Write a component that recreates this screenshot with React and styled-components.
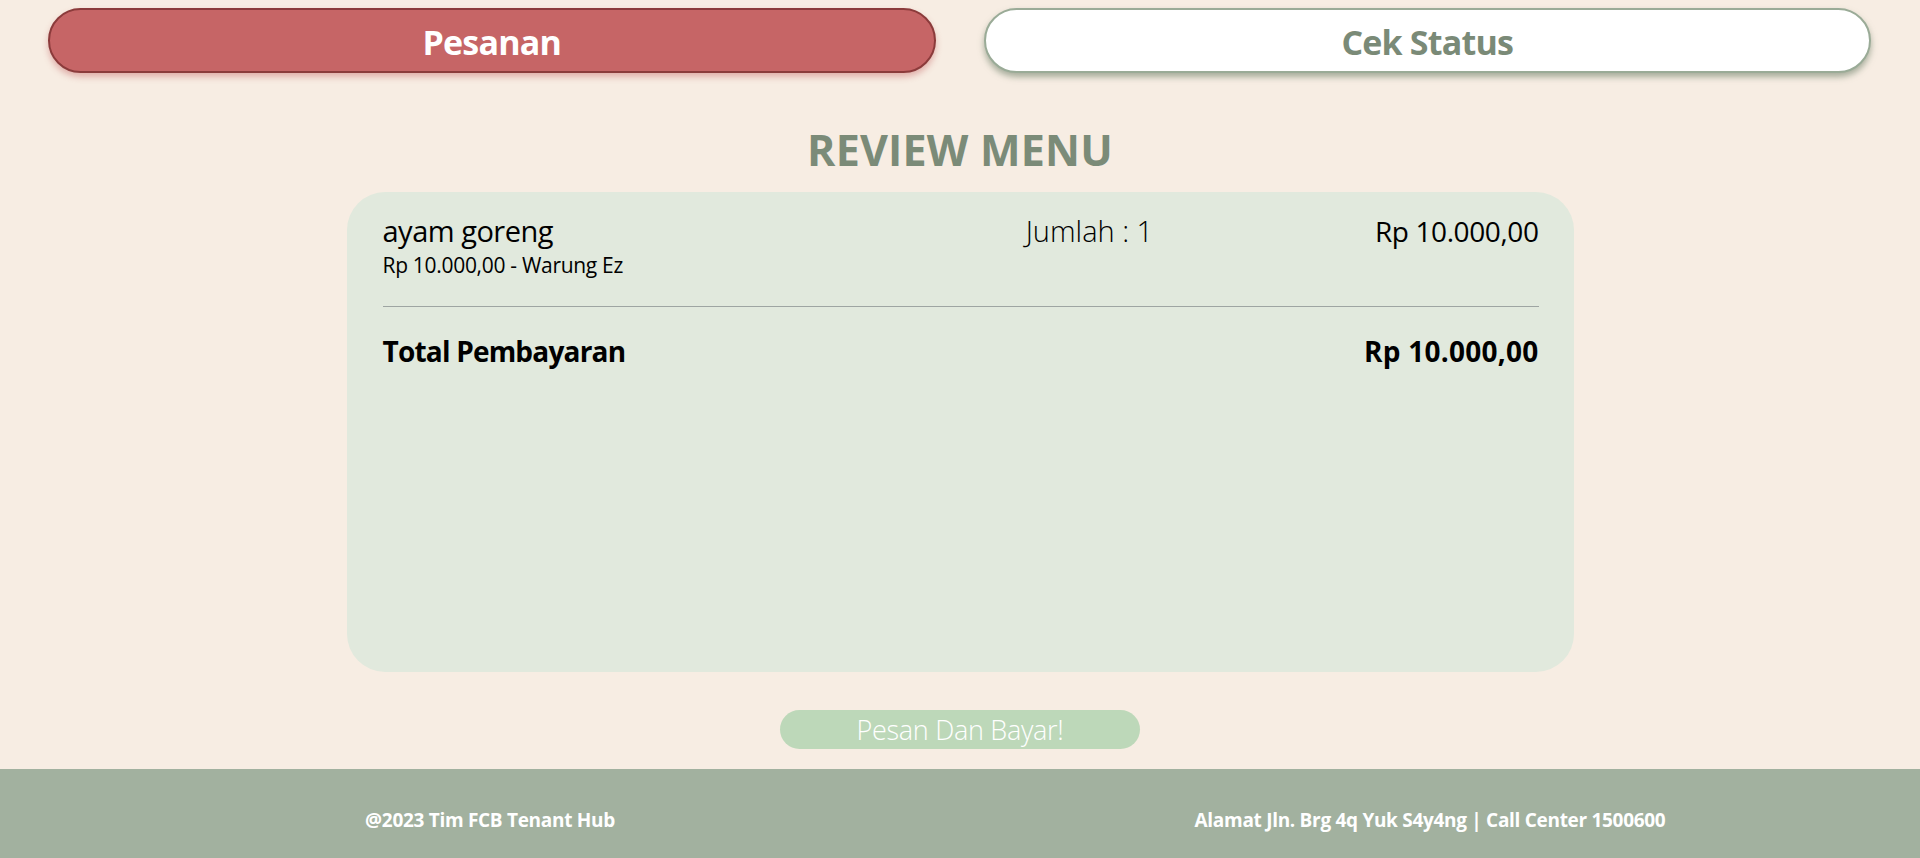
import React from "react";
import styled, { createGlobalStyle } from "styled-components";

const Global = createGlobalStyle`
  * { box-sizing: border-box; }
  html, body { margin: 0; padding: 0; }
  body {
    background: #f7ede3;
    font-family: "Open Sans", "Noto Sans", sans-serif;
    color: #000;
  }
`;

const Page = styled.div`
  min-height: 858px;
  display: flex;
  flex-direction: column;
`;

const TabBar = styled.nav`
  display: grid;
  grid-template-columns: 1fr 1fr;
  gap: 48px;
  padding: 8px 49px 0 48px;
`;

const Tab = styled.button`
  height: 65px;
  border-radius: 33px;
  border: 2px solid ${(p) => (p.$active ? "#8b3b3b" : "#9aab97")};
  background: ${(p) => (p.$active ? "#c66566" : "#ffffff")};
  color: ${(p) => (p.$active ? "#ffffff" : "#7a8a77")};
  box-shadow: 0 4px 6px
    ${(p) => (p.$active ? "rgba(198, 101, 102, 0.45)" : "rgba(100, 120, 96, 0.55)")};
  font-family: "Open Sans", sans-serif;
  font-weight: 700;
  font-size: 34px;
  letter-spacing: -0.8px;
  line-height: 44px;
  cursor: pointer;
  padding: 3px 0 0;
`;

const Main = styled.main`
  display: flex;
  flex-direction: column;
  align-items: center;
  flex: 1;
`;

const Heading = styled.h1`
  margin: 0 0 15px;
  padding-top: 50px;
  font-size: 43px;
  line-height: 54px;
  font-weight: 700;
  color: #7b8b78;
  letter-spacing: 0.2px;
`;

const Card = styled.section`
  width: 1227px;
  height: 480px;
  background: #e1e9dd;
  border-radius: 38px;
  padding: 21px 35px 0 36px;
`;

const ItemRow = styled.div`
  display: grid;
  grid-template-columns: 1fr 1fr 1fr;
  align-items: start;
  padding-bottom: 28px;
  border-bottom: 1px solid #9ea5a2;
`;

const ItemName = styled.div`
  font-size: 29px;
  font-weight: 500;
  line-height: 36px;
  letter-spacing: -0.5px;
`;

const ItemMeta = styled.div`
  margin-top: 3px;
  font-size: 21px;
  line-height: 26px;
  letter-spacing: -0.3px;
`;

const Qty = styled.div`
  justify-self: end;
  font-size: 29px;
  font-weight: 300;
  line-height: 36px;
`;

const Price = styled.div`
  justify-self: end;
  font-size: 28px;
  font-weight: 500;
  line-height: 36px;
  letter-spacing: -0.4px;
`;

const TotalRow = styled.div`
  display: flex;
  justify-content: space-between;
  padding-top: 25px;
  font-size: 28px;
  font-weight: 700;
  line-height: 38px;
`;

const TotalLabel = styled.span`
  letter-spacing: -0.8px;
`;

const TotalValue = styled.span`
  letter-spacing: 0.25px;
`;

const OrderButton = styled.button`
  margin-top: 38px;
  width: 360px;
  height: 39px;
  border: none;
  border-radius: 20px;
  background: #bdd8b9;
  color: #ffffff;
  font-family: "Open Sans", sans-serif;
  font-size: 27px;
  font-weight: 300;
  line-height: 39px;
  letter-spacing: -0.3px;
  padding: 0;
  cursor: pointer;
`;

const Footer = styled.footer`
  margin-top: 20px;
  height: 89px;
  background: #a2b19f;
  display: grid;
  grid-template-columns: 1fr 1fr;
  align-items: center;
  padding: 12px 20px 0;
  color: #ffffff;
  font-size: 19px;
  font-weight: 700;
  letter-spacing: -0.3px;
`;

const FooterText = styled.div`
  text-align: center;
`;

export default function App() {
  return (
    <>
      <Global />
      <Page>
        <TabBar>
          <Tab $active>Pesanan</Tab>
          <Tab>Cek Status</Tab>
        </TabBar>
        <Main>
          <Heading>REVIEW MENU</Heading>
          <Card>
            <ItemRow>
              <div>
                <ItemName>ayam goreng</ItemName>
                <ItemMeta>Rp 10.000,00 - Warung Ez</ItemMeta>
              </div>
              <Qty>Jumlah : 1</Qty>
              <Price>Rp 10.000,00</Price>
            </ItemRow>
            <TotalRow>
              <TotalLabel>Total Pembayaran</TotalLabel>
              <TotalValue>Rp 10.000,00</TotalValue>
            </TotalRow>
          </Card>
          <OrderButton>Pesan Dan Bayar!</OrderButton>
        </Main>
        <Footer>
          <FooterText>@2023 Tim FCB Tenant Hub</FooterText>
          <FooterText>Alamat Jln. Brg 4q Yuk S4y4ng | Call Center 1500600</FooterText>
        </Footer>
      </Page>
    </>
  );
}
